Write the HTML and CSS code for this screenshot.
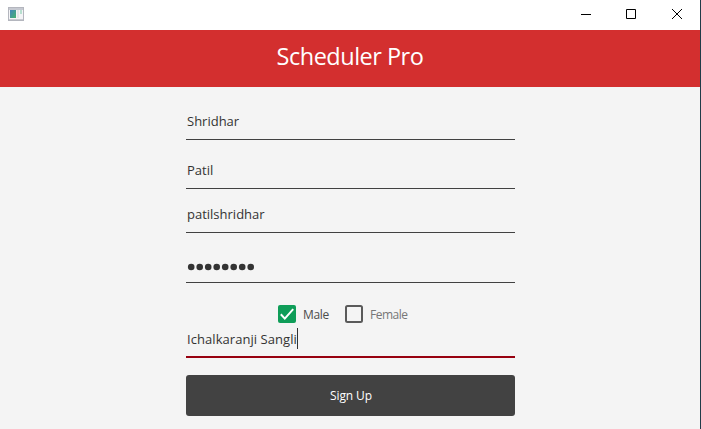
FILE: index.html
```html
<!DOCTYPE html>
<html lang="en">
<head>
<meta charset="utf-8">
<title>Scheduler Pro</title>
<link rel="stylesheet" href="styles.css">
</head>
<body>
<div class="window">
  <div class="titlebar">
    <svg class="app-icon" width="16" height="14" viewBox="0 0 16 14">
      <defs><linearGradient id="g" x1="0" y1="0" x2="1" y2="1"><stop offset="0" stop-color="#4384bd"/><stop offset="1" stop-color="#45b36d"/></linearGradient></defs>
      <rect x=".5" y=".5" width="15" height="13" fill="#f4f4f6" stroke="#b4b6be"/>
      <rect x="1" y="1" width="14" height="2" fill="#c6c9d1"/>
      <rect x="2" y="3" width="6" height="8" fill="url(#g)"/>
      <rect x="9" y="3" width="2" height="8" fill="#e4e5e8"/>
      <rect x="12" y="3" width="2" height="4" fill="#b8dfcf"/>
      <rect x="1" y="12" width="14" height="1" fill="#c9cbd2"/>
    </svg>
    <div class="controls">
      <svg width="10" height="10" viewBox="0 0 10 10"><path d="M0 5.5H10"/></svg>
      <svg width="10" height="10" viewBox="0 0 10 10"><path d="M.5 .5H9.5V9.5H.5Z"/></svg>
      <svg width="10" height="10" viewBox="0 0 10 10"><path d="M0 0L10 10M10 0L0 10"/></svg>
    </div>
  </div>
  <header class="header"><h1>Scheduler Pro</h1></header>
  <main class="form">
    <div class="field first"><span>Shridhar</span></div>
    <div class="field last"><span>Patil</span></div>
    <div class="field user"><span>patilshridhar</span></div>
    <div class="field password">
      <svg width="70" height="8" viewBox="0 0 70 8"><g fill="#333"><circle cx="4.2" cy="4" r="3.3"/><circle cx="12.7" cy="4" r="3.3"/><circle cx="21.2" cy="4" r="3.3"/><circle cx="29.7" cy="4" r="3.3"/><circle cx="38.2" cy="4" r="3.3"/><circle cx="46.7" cy="4" r="3.3"/><circle cx="55.2" cy="4" r="3.3"/><circle cx="63.7" cy="4" r="3.3"/></g></svg>
    </div>
    <div class="options">
      <label class="option male">
        <svg width="18" height="18" viewBox="0 0 18 18"><rect width="18" height="18" rx="2" fill="#0f9d58"/><path d="M2.8 9.3L6.8 13.6L15.2 4.2" fill="none" stroke="#fff" stroke-width="2"/></svg>
        <span>Male</span>
      </label>
      <label class="option female">
        <svg width="18" height="18" viewBox="0 0 18 18"><rect x="1" y="1" width="16" height="16" rx="1.5" fill="none" stroke="#5a5a5a" stroke-width="2"/></svg>
        <span>Female</span>
      </label>
    </div>
    <div class="field address"><span>Ichalkaranji Sangli</span><b class="caret"></b></div>
    <button class="submit" type="button"><span>Sign Up</span></button>
  </main>
</div>
</body>
</html>
```
FILE: styles.css
```css
* { box-sizing: border-box; }
body {
  margin: 0;
  font-family: "Open Sans", "Noto Sans", sans-serif;
  color: #333;
  overflow: hidden;
}
.window {
  width: 701px;
  height: 429px;
  background: #f4f4f4;
  border-right: 1px solid #203c49;
}
.titlebar {
  height: 30px;
  padding: 0 18px 0 8px;
  background: #fff;
  display: flex;
  align-items: center;
  justify-content: space-between;
}
.app-icon { margin-top: -2px; }
.controls { display: flex; gap: 35px; margin-top: -2px; }
.controls svg { fill: none; stroke: #000; stroke-width: 1; }
.controls svg:nth-child(3) { margin-left: 1px; }
.header {
  height: 57px;
  background: #d32f2f;
  text-align: center;
}
h1 {
  margin: 0;
  font-size: 23.5px;
  font-weight: 400;
  letter-spacing: -.5px;
  line-height: 52px;
  color: #fff;
}
.form { width: 329px; margin: 0 auto 0 186px; }
.field {
  display: flex;
  align-items: flex-end;
  padding: 0 1px 8px;
  border-bottom: 1px solid #414141;
  font-size: 13px;
  line-height: 20px;
  white-space: nowrap;
}
.first { height: 53px; }
.last { height: 49px; }
.user { height: 44px; }
.password { height: 50px; padding-bottom: 11px; }
.options {
  display: flex;
  height: 41px;
  padding: 22px 0 0 92px;
}
.option { display: flex; height: 18px; gap: 7px; font-size: 12px; line-height: 19px; }
.male { width: 67px; letter-spacing: -.3px; color: #4c4c4c; }
.female { letter-spacing: -.5px; color: #777; }
.address { height: 34px; padding-bottom: 7px; border-bottom: 2px solid #97000f; letter-spacing: .06px; }
.caret { width: 1px; height: 21px; background: #333; }
.submit {
  display: block;
  width: 100%;
  height: 41px;
  margin-top: 17px;
  padding: 0 0 0 1px;
  border: 0;
  border-radius: 3px;
  background: #424242;
  color: #fff;
  font: 12px/41px "Open Sans", "Noto Sans", sans-serif;
  letter-spacing: -.1px;
}
```
